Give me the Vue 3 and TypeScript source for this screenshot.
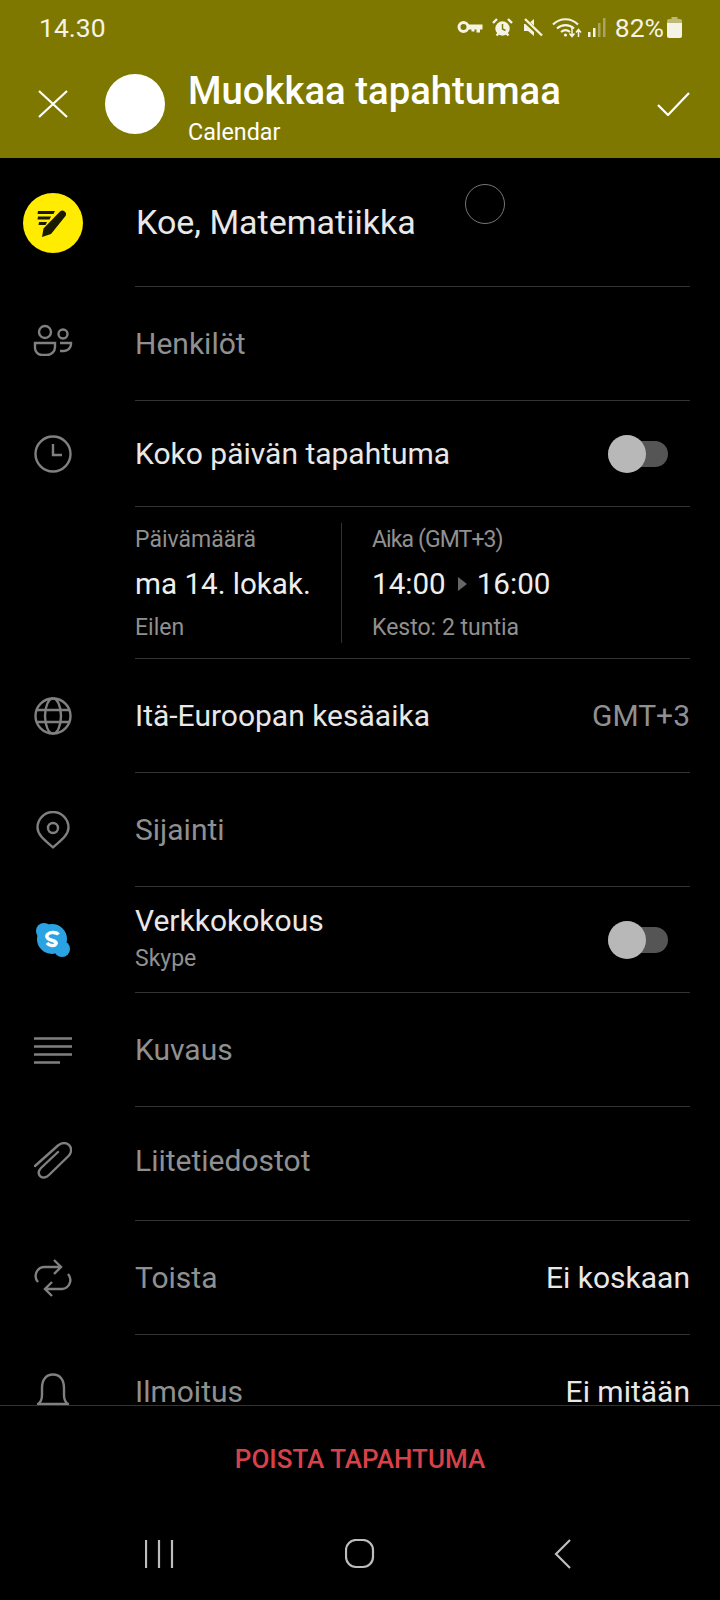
<template>
  <div class="screen">
    <!-- status bar + app bar share the olive colour -->
    <header class="top">
      <div class="status">
        <span class="clock">14.30</span>
        <div class="status-right">
          <svg class="s-key" width="26" height="14" viewBox="0 0 26 14" fill="none">
            <circle cx="6.500" cy="7" r="4.500" stroke="#f5f3e6" stroke-width="3" />
            <path d="M11 4.500h14.500v5h-2.500v3h-3.500v-3h-2v2h-3v-2H11z" fill="#f5f3e6" />
          </svg>
          <svg class="s-alarm" width="21" height="19" viewBox="0 0 21 19" fill="none">
            <circle cx="10.500" cy="10.500" r="7.200" fill="#f5f3e6" />
            <path d="M10.500 6v5l3 1.500" stroke="#7f7800" stroke-width="1.400" />
            <path d="M1 5l4-4M20 5l-4-4M4.500 17.500l2-2M16.500 17.500l-2-2" stroke="#f5f3e6" stroke-width="2.400" />
          </svg>
          <svg class="s-mute" width="21" height="19" viewBox="0 0 21 19" fill="none">
            <path d="M2 6h4l6-5v17l-6-5H2z" fill="#f5f3e6" />
            <path d="M1.500 1l18 17" stroke="#7f7800" stroke-width="4.500" />
            <path d="M3 1l17 16.500" stroke="#f5f3e6" stroke-width="2.400" />
          </svg>
          <svg class="s-wifi" width="30" height="21" viewBox="0 0 30 21" fill="none">
            <path d="M1 7.500c7-7 18-7 25 0M5 11.500c5-4.500 12-4.500 17 0M9 15c3-2.400 6-2.400 9 0" stroke="#f5f3e6" stroke-width="2.200" />
            <circle cx="13.500" cy="18" r="1.600" fill="#f5f3e6" />
            <path d="M20 11v8M17.500 16.500l2.500 3 2.500-3M26.500 20v-7M24 15.500l2.500-3 2.500 3" stroke="#f5f3e6" stroke-width="1.500" />
          </svg>
          <svg class="s-signal" width="18" height="19" viewBox="0 0 18 19">
            <rect x="0" y="14" width="2.500" height="5" fill="#f5f3e6" />
            <rect x="5" y="10" width="2.500" height="9" fill="#f5f3e6" />
            <rect x="10" y="5" width="2.500" height="14" fill="#aaa55a" />
            <rect x="15" y="0" width="2.500" height="19" fill="#aaa55a" />
          </svg>
          <span class="pct">82%</span>
          <svg class="s-batt" width="15" height="21" viewBox="0 0 15 21">
            <path d="M4.500 0h6v2h2.500a2 2 0 0 1 2 2v3H0V4a2 2 0 0 1 2-2h2.500z" fill="#bdb97a" />
            <path d="M0 6h15v13a2 2 0 0 1-2 2H2a2 2 0 0 1-2-2z" fill="#f5f3e6" />
          </svg>
        </div>
      </div>
      <div class="appbar">
        <svg class="ab-close" width="30" height="28" viewBox="0 0 30 28" fill="none">
          <path d="M1 1l28 26M29 1L1 27" stroke="#fff" stroke-width="2.200" />
        </svg>
        <div class="avatar"></div>
        <div class="ab-titles">
          <div class="ab-title">Muokkaa tapahtumaa</div>
          <div class="ab-sub">Calendar</div>
        </div>
        <svg class="ab-check" width="33" height="24" viewBox="0 0 33 24" fill="none">
          <path d="M1 13l10 10L32 1" stroke="#fff" stroke-width="2.200" />
        </svg>
      </div>
    </header>

    <main class="scroll">
      <div class="touch-ring"></div>

      <div class="row row-title">
        <div class="ico">
          <div class="note-badge">
            <svg width="36" height="30" viewBox="0 0 36 30">
              <path d="M3 3h17l-1.500 3H2.500zM3 8.500h13l-1.500 3H2.500zM4 14h8l-1.500 3H3.500z" fill="#1a1a00" />
              <path d="M25 3.500a3.600 3.600 0 0 1 5.500 4.500L16 26l-9 3 1.500-8.500z" fill="#1a1a00" />
            </svg>
          </div>
        </div>
        <div class="body"><span class="txt title-txt">Koe, Matematiikka</span></div>
      </div>

      <div class="row r114">
        <div class="ico ico-up">
          <svg width="40" height="32" viewBox="0 0 40 32" fill="none" class="stroke">
            <circle cx="12" cy="8" r="6" />
            <circle cx="30" cy="10" r="4.500" />
            <path d="M2 19h20v4a8 8 0 0 1-8 8H9a7 7 0 0 1-7-7z" />
            <path d="M27 19h11v1a7 7 0 0 1-7 7h-4" />
          </svg>
        </div>
        <div class="body"><span class="txt dim">Henkilöt</span></div>
      </div>

      <div class="row r106">
        <div class="ico">
          <svg width="38" height="38" viewBox="0 0 38 38" fill="none" class="stroke">
            <circle cx="19" cy="19" r="17.500" />
            <path d="M19 9v11h9" />
          </svg>
        </div>
        <div class="body">
          <span class="txt">Koko päivän tapahtuma</span>
          <div class="toggle"><span class="thumb"></span></div>
        </div>
      </div>

      <div class="row date-row">
        <div class="ico"></div>
        <div class="body date-body">
          <div class="col col-date">
            <span class="small dim">Päivämäärä</span>
            <span class="big">ma 14. lokak.</span>
            <span class="small dim">Eilen</span>
          </div>
          <div class="col col-time">
            <span class="small dim tight">Aika (GMT+3)</span>
            <span class="big time-line">14:00<i class="tri"></i>16:00</span>
            <span class="small dim">Kesto: 2 tuntia</span>
          </div>
        </div>
      </div>

      <div class="row r114">
        <div class="ico">
          <svg width="38" height="38" viewBox="0 0 38 38" fill="none" class="stroke">
            <circle cx="19" cy="19" r="17.500" />
            <ellipse cx="19" cy="19" rx="8" ry="17.500" />
            <path d="M3 13h32M3 25h32" />
          </svg>
        </div>
        <div class="body">
          <span class="txt">Itä-Euroopan kesäaika</span>
          <span class="txt dim">GMT+3</span>
        </div>
      </div>

      <div class="row r114">
        <div class="ico">
          <svg width="34" height="38" viewBox="0 0 34 38" fill="none" class="stroke">
            <path d="M17 36.500C12 31.500 1.500 25 1.500 16.500a15.500 15.500 0 0 1 31 0C32.500 25 22 31.500 17 36.500z" stroke-linejoin="round" />
            <circle cx="17" cy="17" r="5" />
          </svg>
        </div>
        <div class="body"><span class="txt dim">Sijainti</span></div>
      </div>

      <div class="row r106">
        <div class="ico">
          <svg width="36" height="36" viewBox="0 0 36 36">
            <circle cx="17" cy="17" r="15" fill="#2ba3e3" />
            <circle cx="9" cy="9" r="8" fill="#2ba3e3" />
            <circle cx="27" cy="27" r="8" fill="#2ba3e3" />
            <path d="M23.500 12.500c-1.500-2-8-3.500-11 0-2 3 1 5 5 6 3.500 1 4.500 2.500 3 4-2 2-6.500 1-8.500-1.500" fill="none" stroke="#fff" stroke-width="3.400" />
          </svg>
        </div>
        <div class="body">
          <div class="stack">
            <span class="txt">Verkkokokous</span>
            <span class="small dim skype">Skype</span>
          </div>
          <div class="toggle"><span class="thumb"></span></div>
        </div>
      </div>

      <div class="row r114">
        <div class="ico">
          <svg width="38" height="27" viewBox="0 0 38 27" fill="none" class="stroke">
            <path d="M0 1.500h38M0 9.500h38M0 17.500h38M0 25.500h26" />
          </svg>
        </div>
        <div class="body"><span class="txt dim">Kuvaus</span></div>
      </div>

      <div class="row r114 shift-up">
        <div class="ico">
          <svg width="38" height="38" viewBox="0 0 38 38" fill="none" class="stroke">
            <path d="M1 24L24 3.500c4-3.500 9-3 11.500 0 2.500 3 2 7.500-1 10.500L15 33c-3 3-7 3.500-9 1s-1.500-5.500 1-8L24 10" stroke-linecap="round" />
          </svg>
        </div>
        <div class="body"><span class="txt dim">Liitetiedostot</span></div>
      </div>

      <div class="row r114">
        <div class="ico">
          <svg width="38" height="38" viewBox="0 0 38 38" fill="none" class="stroke">
            <path d="M20 1l7 7-7 7M27 8H10a9 9 0 0 0-6 15M18 37l-7-7 7-7M11 30h17a9 9 0 0 0 6-15" />
          </svg>
        </div>
        <div class="body">
          <span class="txt dim">Toista</span>
          <span class="txt">Ei koskaan</span>
        </div>
      </div>

      <div class="row r114">
        <div class="ico">
          <svg width="34" height="38" viewBox="0 0 34 38" fill="none" class="stroke">
            <path d="M2 31c3-2 4-5 4-9v-7C6 7 10 1.500 17 1.500S28 7 28 15v7c0 4 1 7 4 9z" stroke-linejoin="round" />
            <path d="M13 33h8" />
          </svg>
        </div>
        <div class="body">
          <span class="txt dim last">Ilmoitus</span>
          <span class="txt last">Ei mitään</span>
        </div>
      </div>
    </main>

    <footer class="bottom">
      <div class="delete">POISTA TAPAHTUMA</div>
      <nav class="navbar">
        <svg width="30" height="30" viewBox="0 0 30 30" fill="none" class="nav-ico">
          <path d="M1 1v28M14 1v28M27 1v28" />
        </svg>
        <svg width="30" height="30" viewBox="0 0 30 30" fill="none" class="nav-ico">
          <rect x="1" y="1" width="27" height="27" rx="10" />
        </svg>
        <svg width="18" height="30" viewBox="0 0 18 30" fill="none" class="nav-ico">
          <path d="M16 1L2 15l14 14" />
        </svg>
      </nav>
    </footer>
  </div>
</template>

<script setup lang="ts">
</script>

<style>
body { background: #000; }
</style>

<style scoped>
.screen{width:720px;height:1600px;background:#000;color:#e8e8e8;display:flex;flex-direction:column;overflow:hidden;font-family:Roboto,"Liberation Sans",sans-serif}

.top{height:158px;background:#7f7800;color:#fff;flex:none}
.status{height:50px;display:flex;align-items:center;justify-content:space-between;padding:4px 38px 0 39px;box-sizing:border-box}
.clock{font-size:26.500px;color:#f5f3e6}
.status-right{display:flex;align-items:center}
.s-key{margin-right:9px}
.s-alarm{margin-right:9px}
.s-mute{margin-right:9px}
.s-wifi{margin-right:6px}
.s-signal{margin-right:9px}
.pct{font-size:26.500px;color:#f5f3e6;margin-right:3px}

.appbar{height:108px;display:flex;align-items:center;padding:0 30px 0 38px}
.avatar{width:60px;height:60px;border-radius:50%;background:#fff;margin:0 23px 0 37px;flex:none}
.ab-titles{flex:1;padding-top:5px}
.ab-title{font-size:38.300px;font-weight:500;line-height:44px}
.ab-sub{font-size:23.300px;line-height:26px;margin-top:6px}

.scroll{flex:1;min-height:0;overflow:hidden;position:relative}
.touch-ring{position:absolute;left:465px;top:26px;width:38px;height:38px;border:1px solid #777;border-radius:50%}

.row{display:flex;flex:none}
.row-title{height:129px}
.r114{height:114px}
.r106{height:106px}
.date-row{height:152px}

.ico{width:135px;flex:none;display:flex;align-items:center;justify-content:center;padding-right:30px;box-sizing:border-box}
.ico-up{padding-bottom:8px}
.stroke{stroke:#808080;stroke-width:2.400}
.note-badge{width:60px;height:60px;border-radius:50%;background:#ffec00;display:flex;align-items:center;justify-content:center}

.body{flex:1;margin-right:30px;border-bottom:1px solid #333;display:flex;align-items:center;justify-content:space-between;box-sizing:border-box}
.txt{font-size:30px;line-height:34px;white-space:nowrap}
.txt.last{line-height:26px}
.title-txt{font-size:34px;line-height:40px;margin-left:1px}
.dim{color:#909090}
.shift-up .ico{padding-bottom:6px}
.shift-up .txt{margin-bottom:6px}
.stack{display:flex;flex-direction:column;margin-top:-4px}
.small{font-size:23px;line-height:26px}
.tight{letter-spacing:-.9px}
.skype{margin-top:8px}

.toggle{width:60px;height:26px;border-radius:13px;background:#555;position:relative;margin-right:22px}
.thumb{position:absolute;left:0;top:-6px;width:38px;height:38px;border-radius:50%;background:#b8b8b8}

.date-body{align-items:stretch;justify-content:flex-start}
.col{display:flex;flex-direction:column;justify-content:space-between}
.col-date{width:207px;border-right:1px solid #333;box-sizing:border-box;margin:16px 0 15px;padding:4px 0 2px}
.col-time{padding:4px 0 2px 30px;margin:16px 0 15px}
.big{font-size:29.600px;line-height:34px;color:#eee}
.time-line{display:flex;align-items:center}
.tri{width:0;height:0;border-left:9px solid #666;border-top:7px solid transparent;border-bottom:7px solid transparent;margin:0 10px 0 12px}

.bottom{height:195px;flex:none;border-top:1px solid #333;box-sizing:border-box;display:flex;flex-direction:column}
.delete{height:105px;display:flex;align-items:center;justify-content:center;color:#d9414a;font-size:26px;font-weight:500}
.navbar{flex:1;display:flex;align-items:center;padding:0 0 4px 145px}
.nav-ico{stroke:#bdbdbd;stroke-width:2.200}
.navbar svg:nth-child(2){margin-left:170px}
.navbar svg:nth-child(3){margin-left:179px}
</style>
